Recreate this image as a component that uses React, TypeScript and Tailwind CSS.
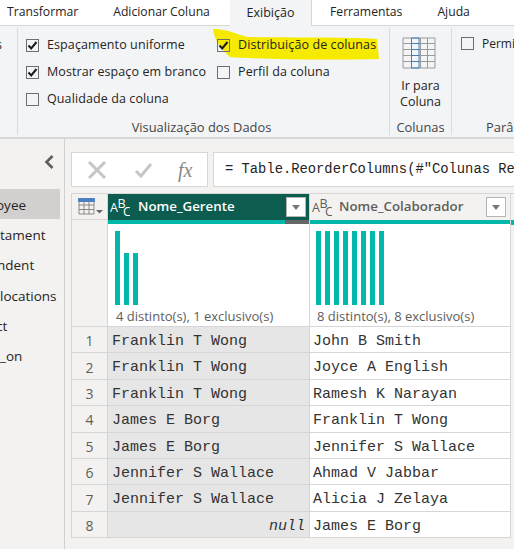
const sidebarItems = [
  { label: 'oyee', offset: 'ml-[-4px]' },
  { label: 'tament', offset: '' },
  { label: 'ndent', offset: 'ml-[-3px]' },
  { label: 'locations', offset: '' },
  { label: 'ct', offset: 'ml-[-4px]' },
  { label: '_on', offset: '' },
];

const rows = [
  ['Franklin T Wong', 'John B Smith'],
  ['Franklin T Wong', 'Joyce A English'],
  ['Franklin T Wong', 'Ramesh K Narayan'],
  ['James E Borg', 'Franklin T Wong'],
  ['James E Borg', 'Jennifer S Wallace'],
  ['Jennifer S Wallace', 'Ahmad V Jabbar'],
  ['Jennifer S Wallace', 'Alicia J Zelaya'],
  [null, 'James E Borg'],
];

const Check = ({ checked }: { checked?: boolean }) => (
  <span className="flex h-[13px] w-[13px] shrink-0 items-center justify-center border border-[#6e6e6e]">
    {checked && (
      <svg width="11" height="11" viewBox="0 0 11 11" fill="none">
        <path d="M1.5 5.5 L4.2 8.5 L9.5 2" stroke="#1b1b1b" strokeWidth="2" />
      </svg>
    )}
  </span>
);

const Option = ({ label, checked }: { label: string; checked?: boolean }) => (
  <div className="flex h-[27px] items-center gap-2">
    <Check checked={checked} />
    <span className="whitespace-nowrap tracking-[0.1px]">{label}</span>
  </div>
);

const GroupLabel = ({ children }: { children: React.ReactNode }) => (
  <div className="mt-auto h-[16px] whitespace-nowrap text-center text-[12.9px] leading-[16px] text-[#444]">{children}</div>
);

const AbcIcon = ({ color }: { color: string }) => (
  <svg width="20" height="22" viewBox="0 0 20 22" className="shrink-0" fill={color} fontFamily="'Open Sans', sans-serif" fontSize="12.5" fontWeight="500">
    <text x="0" y="15.5">A</text>
    <text x="7.5" y="11.5">B</text>
    <text x="13" y="19.5">C</text>
  </svg>
);

const Dropdown = () => (
  <span className="flex h-[20px] w-[20px] shrink-0 items-center justify-center border border-[#b5b5b5] bg-white">
    <span className="h-0 w-0 border-x-[4px] border-t-[5px] border-x-transparent border-t-[#777]" />
  </span>
);

const Bars = ({ heights }: { heights: number[] }) => (
  <div className="flex h-[74px] items-end gap-[4px]">
    {heights.map((h, i) => (
      <div key={i} className="w-[5px] bg-[#01b8aa]" style={{ height: h }} />
    ))}
  </div>
);

export default function App() {
  return (
    <div className="flex h-[549px] w-[514px] flex-col overflow-hidden bg-[#f3f2f1] font-['Open_Sans',sans-serif] text-[12.5px] text-[#252423]">
      {/* tabs */}
      <div className="flex h-[26px] bg-white text-[12.2px]">
        <div className="flex w-[230px] items-center gap-[35px] border-b border-[#d6d6d6] pl-[7px]">
          <span>Transformar</span>
          <span>Adicionar Coluna</span>
        </div>
        <div className="flex w-[82px] items-center justify-center border-r border-[#d6d6d6] bg-[#f3f4f6] text-[12.5px]">Exibição</div>
        <div className="flex flex-1 items-center gap-[35px] border-b border-[#d6d6d6] pl-[18px]">
          <span>Ferramentas</span>
          <span>Ajuda</span>
        </div>
      </div>

      {/* ribbon */}
      <div className="relative flex h-[113px] border-b-2 border-[#d8d8d8] bg-[#f3f4f6] py-[2px]">
        <div className="w-[18px] overflow-hidden border-r border-[#dcdcdc] pt-[8px] text-right">
          <span className="block -translate-x-[15px]">s</span>
        </div>
        <div className="flex w-[372px] flex-col border-r border-[#dcdcdc]">
          <div className="relative flex gap-[11px] pl-[8px] pt-[4px]">
            {/* marker highlight */}
            <svg className="absolute left-[194px] top-[-2px]" width="172" height="36" viewBox="0 0 172 36">
              <path d="M1 3 C12 2 24 8 36 11 C80 12 130 11 165 13 L167 33 C120 34 60 34 18 31 C10 24 2 14 1 3Z" fill="#f6ea00" />
            </svg>
            <div className="relative flex flex-col">
              <Option label="Espaçamento uniforme" checked />
              <Option label="Mostrar espaço em branco" checked />
              <Option label="Qualidade da coluna" />
            </div>
            <div className="relative flex flex-col">
              <Option label="Distribuição de colunas" checked />
              <Option label="Perfil da coluna" />
            </div>
          </div>
          <div className="mt-auto pr-[4px]">
            <GroupLabel>Visualização dos Dados</GroupLabel>
          </div>
        </div>
        <div className="flex w-[62px] flex-col items-center border-r border-[#dcdcdc]">
          <svg className="mr-[4px] mt-[9px]" width="34" height="32" viewBox="0 0 34 32" fill="none">
            <path d="M1 1H33V31H1ZM1 6.5H33M1 12.5H33M1 18.5H33M1 24.5H33M18.5 1V31M25.5 1V31" stroke="#9a9a9a" />
            <path d="M9.5 1H17V31H9.5ZM9.5 6.5H17M9.5 12.5H17M9.5 18.5H17M9.5 24.5H17" stroke="#3f7fbf" />
          </svg>
          <div className="mt-[9px] text-center leading-[16px]">
            Ir para
            <br />
            Coluna
          </div>
          <GroupLabel>Colunas</GroupLabel>
        </div>
        <div className="flex flex-1 flex-col overflow-hidden pl-[9px]">
          <div className="flex h-[27px] items-center gap-2 pt-[4px]">
            <Check />
            <span className="text-[12px]">Permi</span>
          </div>
          <div className="mt-auto h-[16px] pl-[25px] text-[12.9px] leading-[16px] text-[#444]">Parâ</div>
        </div>
      </div>

      <div className="flex min-h-0 flex-1">
        {/* queries panel */}
        <div className="flex w-[65px] shrink-0 flex-col border-r border-[#d2d0ce]">
          <div className="flex h-[50px] items-start justify-end pr-[9px] pt-[15px]">
            <svg width="12" height="16" viewBox="0 0 12 16" fill="none">
              <path d="M9.5 2 L3.5 8 L9.5 14" stroke="#605e5c" strokeWidth="2.6" />
            </svg>
          </div>
          <div className="mr-[4px] flex flex-col overflow-hidden text-[13.5px]">
            {sidebarItems.map((item, i) => (
              <div key={item.label} className={`flex h-[30.2px] items-center whitespace-nowrap pt-[2px] ${i === 0 ? 'bg-[#d2d0ce]' : ''}`}>
                <span className={item.offset}>{item.label}</span>
              </div>
            ))}
          </div>
        </div>

        <div className="flex min-w-0 flex-1 flex-col pl-[6px] pt-[13px]">
          {/* formula bar */}
          <div className="flex h-[35px] gap-[5px]">
            <div className="flex w-[137px] shrink-0 items-center border border-[#d6d6d6] bg-white">
              <svg className="ml-[15px]" width="20" height="18" viewBox="0 0 20 18" fill="none">
                <path d="M2 1 L18 17 M18 1 L2 17" stroke="#c8c6c4" strokeWidth="3" />
              </svg>
              <svg className="ml-[27px]" width="19" height="16" viewBox="0 0 19 16" fill="none">
                <path d="M2 9 L7 14 L17 2" stroke="#c8c6c4" strokeWidth="3" />
              </svg>
              <span className="ml-[25px] font-['Liberation_Serif',serif] text-[20px] italic text-[#888]">fx</span>
            </div>
            <div className="flex flex-1 items-center overflow-hidden whitespace-nowrap border-y border-l border-[#d6d6d6] bg-white pl-[11px] pt-[2px] font-['Liberation_Mono',monospace] text-[13.8px]">
              = Table.ReorderColumns(#"Colunas Re
            </div>
          </div>

          {/* table */}
          <div className="mt-[6px] grid grid-cols-[36px_201px_201px_1fr] grid-rows-[26px_107px_repeat(8,26.4px)] border-l border-t border-[#d6d6d6]">
            <div className="flex items-center border-b border-r border-[#d6d6d6] pl-[6px]">
              <svg width="27" height="17" viewBox="0 0 27 17" fill="none">
                <path d="M1 3H16V16H1ZM1 7H16M1 11.5H16M6 4V16M11 4V16" stroke="#8a8886" />
                <path d="M0.5 0.5H16.5V3.5H0.5Z" fill="#4a7fc0" stroke="#4a7fc0" />
                <path d="M18 12H25L21.5 15.5Z" fill="#666" />
              </svg>
            </div>
            <div className="flex items-center gap-[8px] bg-[#0c5c50] pl-[2px] pr-[3px] font-semibold text-white">
              <AbcIcon color="#fff" />
              <span className="flex-1 text-[13.3px]">Nome_Gerente</span>
              <Dropdown />
            </div>
            <div className="flex items-center gap-[7px] border-l border-[#d6d6d6] pl-[2px] pr-[4px] font-semibold text-[#605e5c]">
              <AbcIcon color="#605e5c" />
              <span className="flex-1 text-[13.3px]">Nome_Colaborador</span>
              <Dropdown />
            </div>
            <div className="border-l border-[#d6d6d6]" />

            <div className="border-b border-r border-[#d6d6d6]" />
            <div className="flex flex-col border-b border-[#d6d6d6] bg-white">
              <div className="flex h-[5px]">
                <div className="flex-1 bg-[#01b8aa]" />
                <div className="w-[24px] bg-[#666]" />
              </div>
              <div className="pl-[7px] pt-[7px]">
                <Bars heights={[74, 52, 52]} />
              </div>
              <div className="mt-[2px] pl-[8px] text-[13px] text-[#605e5c]">4 distinto(s), 1 exclusivo(s)</div>
            </div>
            <div className="flex flex-col border-b border-l border-[#d6d6d6] bg-white">
              <div className="h-[5px] bg-[#01b8aa]" />
              <div className="pl-[6px] pt-[7px]">
                <Bars heights={[74, 74, 74, 74, 74, 74, 74, 74]} />
              </div>
              <div className="mt-[2px] pl-[7px] text-[13px] text-[#605e5c]">8 distinto(s), 8 exclusivo(s)</div>
            </div>
            <div className="flex flex-col border-l border-[#d6d6d6]">
              <div className="h-[5px] bg-[#01b8aa]" />
            </div>

            {rows.map(([manager, employee], i) => (
              <div key={i} className="contents font-['Liberation_Mono',monospace] text-[15px] text-[#333]">
                <div className="flex items-center justify-center border-b border-r border-[#d6d6d6] pt-[2px] font-['Open_Sans',sans-serif] text-[14px] text-[#605e5c]">
                  {i + 1}
                </div>
                <div className="flex items-center border-b border-[#d6d6d6] bg-[#e6e6e6] pl-[4px] pt-[5px]">
                  {manager ?? <span className="w-full pr-[4px] text-right italic">null</span>}
                </div>
                <div className="flex items-center border-b border-l border-[#d6d6d6] bg-white pl-[3px] pt-[5px]">{employee}</div>
                <div className="border-l border-[#d6d6d6]" />
              </div>
            ))}
          </div>
        </div>
      </div>
    </div>
  );
}
